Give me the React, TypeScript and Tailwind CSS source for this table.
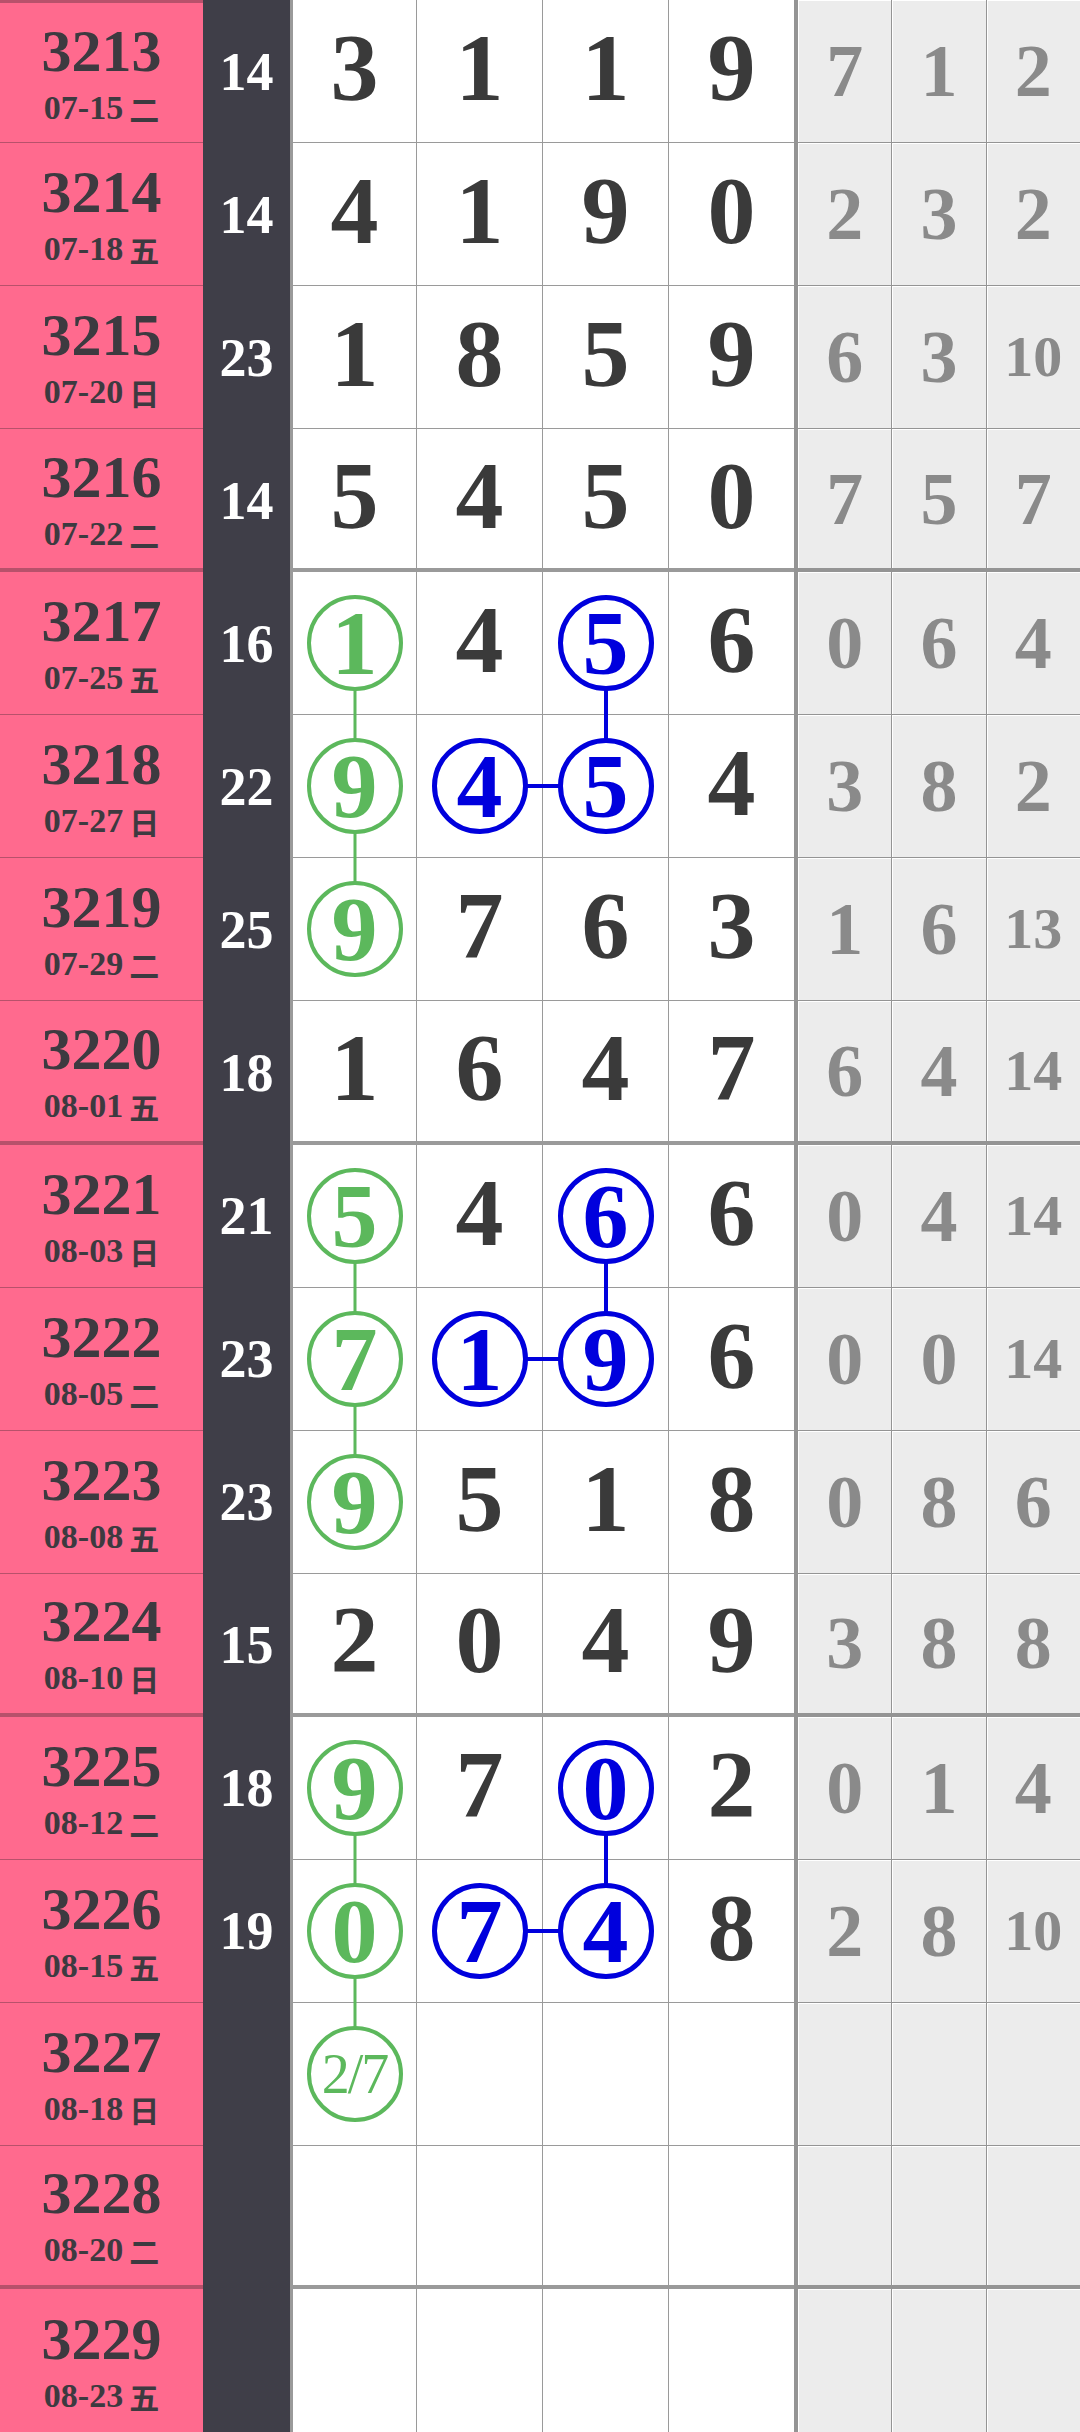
import React from "react";

type Row = { no: string; date: string; wd: string; sum: string; d: string[]; s: string[] };
type Mark = { c: "g" | "b"; down?: boolean; right?: boolean; label?: string };

const ROWS: Row[] = [
  { no: "3213", date: "07-15", wd: "二", sum: "14", d: ["3", "1", "1", "9"], s: ["7", "1", "2"] },
  { no: "3214", date: "07-18", wd: "五", sum: "14", d: ["4", "1", "9", "0"], s: ["2", "3", "2"] },
  { no: "3215", date: "07-20", wd: "日", sum: "23", d: ["1", "8", "5", "9"], s: ["6", "3", "10"] },
  { no: "3216", date: "07-22", wd: "二", sum: "14", d: ["5", "4", "5", "0"], s: ["7", "5", "7"] },
  { no: "3217", date: "07-25", wd: "五", sum: "16", d: ["1", "4", "5", "6"], s: ["0", "6", "4"] },
  { no: "3218", date: "07-27", wd: "日", sum: "22", d: ["9", "4", "5", "4"], s: ["3", "8", "2"] },
  { no: "3219", date: "07-29", wd: "二", sum: "25", d: ["9", "7", "6", "3"], s: ["1", "6", "13"] },
  { no: "3220", date: "08-01", wd: "五", sum: "18", d: ["1", "6", "4", "7"], s: ["6", "4", "14"] },
  { no: "3221", date: "08-03", wd: "日", sum: "21", d: ["5", "4", "6", "6"], s: ["0", "4", "14"] },
  { no: "3222", date: "08-05", wd: "二", sum: "23", d: ["7", "1", "9", "6"], s: ["0", "0", "14"] },
  { no: "3223", date: "08-08", wd: "五", sum: "23", d: ["9", "5", "1", "8"], s: ["0", "8", "6"] },
  { no: "3224", date: "08-10", wd: "日", sum: "15", d: ["2", "0", "4", "9"], s: ["3", "8", "8"] },
  { no: "3225", date: "08-12", wd: "二", sum: "18", d: ["9", "7", "0", "2"], s: ["0", "1", "4"] },
  { no: "3226", date: "08-15", wd: "五", sum: "19", d: ["0", "7", "4", "8"], s: ["2", "8", "10"] },
  { no: "3227", date: "08-18", wd: "日", sum: "", d: ["", "", "", ""], s: ["", "", ""] },
  { no: "3228", date: "08-20", wd: "二", sum: "", d: ["", "", "", ""], s: ["", "", ""] },
  { no: "3229", date: "08-23", wd: "五", sum: "", d: ["", "", "", ""], s: ["", "", ""] },
];

// row-col -> circled mark
const MARKS: Record<string, Mark> = {
  "4-0": { c: "g", down: true },
  "4-2": { c: "b", down: true },
  "5-0": { c: "g", down: true },
  "5-1": { c: "b", right: true },
  "5-2": { c: "b" },
  "6-0": { c: "g" },
  "8-0": { c: "g", down: true },
  "8-2": { c: "b", down: true },
  "9-0": { c: "g", down: true },
  "9-1": { c: "b", right: true },
  "9-2": { c: "b" },
  "10-0": { c: "g" },
  "12-0": { c: "g", down: true },
  "12-2": { c: "b", down: true },
  "13-0": { c: "g", down: true },
  "13-1": { c: "b", right: true },
  "13-2": { c: "b" },
  "14-0": { c: "g", label: "2/7" },
};

const serif = "font-['Liberation_Serif','Noto_Sans_CJK_SC',serif]";

function Circle({ mark, value }: { mark: Mark; value: string }) {
  const green = mark.c === "g";
  return (
    <>
      {mark.down && (
        <div
          className={`absolute left-1/2 top-1/2 z-10 h-[143px] -translate-x-1/2 ${
            green ? "w-[3px] bg-[#5cb85c]" : "w-[4px] bg-[#0000dd]"
          }`}
        />
      )}
      {mark.right && (
        <div className="absolute left-1/2 top-1/2 z-10 h-[4px] w-[126px] -translate-y-1/2 bg-[#0000dd]" />
      )}
      <div
        className={`relative z-20 flex h-[96px] w-[96px] items-center justify-center rounded-full bg-white ${
          green ? "border-[4px] border-[#5cb85c] text-[#5cb85c]" : "border-[5px] border-[#0000dd] text-[#0000dd]"
        }`}
      >
        {mark.label ? (
          <span className="text-[56px] leading-none font-normal tracking-[-2px]">{mark.label}</span>
        ) : (
          <span className="text-[92px] leading-none font-bold">{value}</span>
        )}
      </div>
    </>
  );
}

export default function App() {
  return (
    <div className={`flex h-[2432px] w-[1080px] flex-col overflow-hidden bg-white ${serif}`}>
      {ROWS.map((row, i) => {
        const groupEnd = i % 4 === 3;
        const last = i === ROWS.length - 1;
        const pinkB = last ? "" : groupEnd ? "border-b-[4px] border-[#b8516b]" : "border-b border-[#b8516b]";
        const grayB = last ? "" : groupEnd ? "border-b-[4px]" : "border-b";
        return (
          <div key={row.no} className="flex flex-1">
            {/* issue + date */}
            <div
              className={`flex w-[203px] flex-col items-center justify-center gap-[10px] bg-[#ff6a8e] text-[#3d3a40] ${pinkB} ${
                i === 0 ? "border-t-[3px] border-t-[#b8516b]" : ""
              }`}
            >
              <span className="text-[60px] leading-none font-bold">{row.no}</span>
              <span className="flex items-center gap-[6px] text-[34px] leading-none font-bold">
                {row.date}
                <span className="font-['Noto_Sans_CJK_SC',sans-serif] text-[30px] font-bold">{row.wd}</span>
              </span>
            </div>

            {/* sum */}
            <div className="flex w-[87px] items-center justify-center bg-[#3f3e48] text-[54px] leading-none font-bold text-white">
              {row.sum}
            </div>

            {/* drawn digits */}
            {row.d.map((v, c) => {
              const mark = MARKS[`${i}-${c}`];
              return (
                <div
                  key={c}
                  className={`relative flex w-[126px] items-center justify-center border-[#9a9a9a] bg-white ${grayB} ${
                    c === 0 ? "border-l-[3px]" : "border-l"
                  }`}
                >
                  {mark ? (
                    <Circle mark={mark} value={v} />
                  ) : (
                    <span className="pb-[6px] text-[96px] leading-none font-bold text-[#3a3a3a]">{v}</span>
                  )}
                </div>
              );
            })}

            {/* misses */}
            {row.s.map((v, c) => (
              <div
                key={c}
                className={`flex flex-1 items-center justify-center border-[#949494] bg-[#ececec] font-bold text-[#8a8a8a] shadow-[inset_1px_1px_0_#ffffff] ${grayB} ${
                  c === 0 ? "border-l-[4px]" : "border-l"
                } ${v.length > 1 ? "text-[58px]" : "text-[74px]"} leading-none`}
              >
                {v}
              </div>
            ))}
          </div>
        );
      })}
    </div>
  );
}
